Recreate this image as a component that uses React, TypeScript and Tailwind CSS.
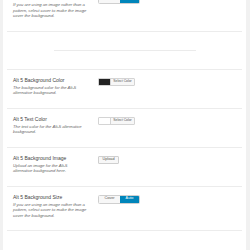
import React from "react";

const font = { fontFamily: '"Liberation Sans", Arial, sans-serif' };

function Row({ title, desc, children }: { title: string; desc: string[]; children: React.ReactNode }) {
  return (
    <div className="mx-[4px] border-b border-[#ececec] flex pt-[7px] pb-[12px] pl-[6px]">
      <div className="w-[85px] shrink-0">
        <div className="text-[5px] leading-[6px] text-[#444]">{title}</div>
        <div className="mt-[2px] italic text-[4.2px] leading-[5.5px] text-[#666]">
          {desc.map((d, i) => (
            <div key={i} className="whitespace-nowrap">{d}</div>
          ))}
        </div>
      </div>
      <div className="flex items-start pt-[1px]">{children}</div>
    </div>
  );
}

function SizeButtons() {
  return (
    <div className="flex h-[9px] rounded-[1.5px] overflow-hidden border border-[#cfcfcf] text-[3.8px]">
      <div className="w-[21px] bg-[#f7f7f7] text-[#555] flex items-center justify-center">Cover</div>
      <div className="w-[19px] bg-[#0085ba] text-white flex items-center justify-center">Auto</div>
    </div>
  );
}

function ColorPicker({ color }: { color: string }) {
  return (
    <div className="flex h-[8px] border border-[#d4d4d4] rounded-[1px] bg-[#f7f7f7] overflow-hidden">
      <div className="w-[12px] border-r border-[#d4d4d4]" style={{ backgroundColor: color }} />
      <div className="w-[23px] flex items-center justify-center text-[3.4px] text-[#555]">Select Color</div>
    </div>
  );
}

export default function App() {
  return (
    <div className="w-[250px] h-[250px] overflow-hidden bg-[#f1f1f1]" style={font}>
      <div className="ml-[3px] w-[243px] h-[250px] bg-white overflow-hidden">
        <div className="mt-[-13px]">
          <Row
            title="Alt 4 Background Size"
            desc={["If you are using an image rather than a", "pattern, select cover to make the image", "cover the background."]}
          >
            <SizeButtons />
          </Row>
          <div className="mx-[4px] border-b border-[#ececec] h-[38px] flex items-center justify-center">
            <div className="w-[142px] h-[1px] bg-[#ebebeb]" />
          </div>
          <Row title="Alt 5 Background Color" desc={["The background color for the Alt-5", "alternative background."]}>
            <ColorPicker color="#222222" />
          </Row>
          <Row title="Alt 5 Text Color" desc={["The text color for the Alt-5 alternative", "background."]}>
            <ColorPicker color="#ffffff" />
          </Row>
          <Row title="Alt 5 Background Image" desc={["Upload an image for the Alt-5", "alternative background here."]}>
            <div className="h-[8px] w-[21px] border border-[#cfcfcf] rounded-[1px] bg-[#f7f7f7] flex items-center justify-center text-[3.8px] text-[#555]">
              Upload
            </div>
          </Row>
          <Row
            title="Alt 5 Background Size"
            desc={["If you are using an image rather than a", "pattern, select cover to make the image", "cover the background."]}
          >
            <SizeButtons />
          </Row>
        </div>
      </div>
    </div>
  );
}
